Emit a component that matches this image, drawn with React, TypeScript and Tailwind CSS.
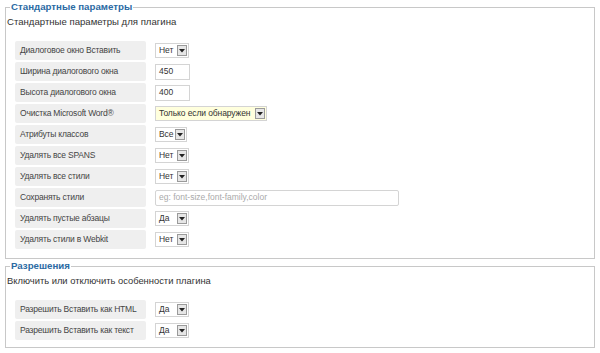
import React from "react";

const font = { fontFamily: '"Liberation Sans", Arial, sans-serif' };

function Sel({ value, w = "w-[34px]", yellow = false }: { value: string; w?: string; yellow?: boolean }) {
  return (
    <div className={`flex h-[15px] ${w} items-center justify-between border border-[#d4d4d4] ${yellow ? "bg-[#ffffdd]" : "bg-white"} pl-[3px] pr-px text-[8.5px] tracking-[-0.1px] text-[#333]`}>
      <span className="whitespace-nowrap leading-none">{value}</span>
      <span className="flex h-[11px] w-[10px] items-center justify-center border border-[#9a9a9a] bg-[#e6e6e6]">
        <svg width="6" height="4" viewBox="0 0 6 4"><path d="M0 0h6L3 3.5z" fill="#222" /></svg>
      </span>
    </div>
  );
}

function Inp({ value, w = "w-[35px]", placeholder = false }: { value: string; w?: string; placeholder?: boolean }) {
  return (
    <div className={`flex h-[16px] ${w} items-center border border-[#d4d4d4] bg-white pl-[3px] text-[8.5px] ${placeholder ? "text-[#aaa] rounded-[2px]" : "text-[#333]"}`}>
      <span className="whitespace-nowrap leading-none">{value}</span>
    </div>
  );
}

function Row({ label, children }: { label: string; children: React.ReactNode }) {
  return (
    <div className="flex items-center">
      <div className="flex h-[19px] w-[131px] items-center whitespace-nowrap rounded-[2px] bg-[#efefef] pl-[5px] text-[8.5px] tracking-[-0.2px] text-[#444]">
        {label}
      </div>
      <div className="ml-[9px] flex items-center">{children}</div>
    </div>
  );
}

export default function App() {
  return (
    <div className="h-[353px] w-[600px] bg-white pt-[1px]" style={font}>
      <fieldset className="mx-[5px] w-[590px] border border-[#c8c8c8] px-[9px] pb-[9px] pt-0">
        <legend className="ml-[-5px] px-px text-[9.7px] font-bold leading-[12px] text-[#2b6aa3]">Стандартные параметры</legend>
        <div className="ml-[-8px] mt-[2px] text-[9.6px] leading-[14px] text-[#333]">Стандартные параметры для плагина</div>
        <div className="mt-[12px] flex flex-col gap-[2px]">
          <Row label="Диалоговое окно Вставить"><Sel value="Нет" /></Row>
          <Row label="Ширина диалогового окна"><Inp value="450" /></Row>
          <Row label="Высота диалогового окна"><Inp value="400" /></Row>
          <Row label="Очистка Microsoft Word®"><Sel value="Только если обнаружен" w="w-[112px]" yellow /></Row>
          <Row label="Атрибуты классов"><Sel value="Все" w="w-[32px]" /></Row>
          <Row label="Удалять все SPANS"><Sel value="Нет" /></Row>
          <Row label="Удалять все стили"><Sel value="Нет" /></Row>
          <Row label="Сохранять стили"><Inp value="eg: font-size,font-family,color" w="w-[244px]" placeholder /></Row>
          <Row label="Удалять пустые абзацы"><Sel value="Да" /></Row>
          <Row label="Удалять стили в Webkit"><Sel value="Нет" /></Row>
        </div>
      </fieldset>
      <fieldset className="mx-[5px] mt-[1px] w-[590px] border border-[#c8c8c8] px-[9px] pb-[7px] pt-0">
        <legend className="ml-[-5px] px-px text-[9.7px] font-bold leading-[12px] text-[#2b6aa3]">Разрешения</legend>
        <div className="ml-[-8px] mt-[2px] text-[9.4px] leading-[14px] text-[#333]">Включить или отключить особенности плагина</div>
        <div className="mt-[12px] flex flex-col gap-[2px]">
          <Row label="Разрешить Вставить как HTML"><Sel value="Да" /></Row>
          <Row label="Разрешить Вставить как текст"><Sel value="Да" /></Row>
        </div>
      </fieldset>
    </div>
  );
}
